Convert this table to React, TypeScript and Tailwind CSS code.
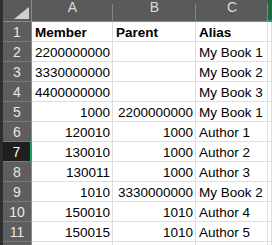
const rows: [string, string, string, string][] = [
  ["2", "2200000000", "", "My Book 1"],
  ["3", "3330000000", "", "My Book 2"],
  ["4", "4400000000", "", "My Book 3"],
  ["5", "1000", "2200000000", "My Book 1"],
  ["6", "120010", "1000", "Author 1"],
  ["7", "130010", "1000", "Author 2"],
  ["8", "130011", "1000", "Author 3"],
  ["9", "1010", "3330000000", "My Book 2"],
  ["10", "150010", "1010", "Author 4"],
  ["11", "150015", "1010", "Author 5"],
  ["12", "", "", ""],
];

const font = { fontFamily: '"Liberation Sans", Arial, sans-serif' };

const RowHeader = ({ n }: { n: string }) => {
  const selected = n === "7";
  return (
    <div
      className={`h-5 flex items-center justify-center pt-[2px] text-[14px] border-b border-[#7a7a7a] ${
        selected
          ? "bg-[#1f1f1f] text-white border-r-2 border-r-[#21a366]"
          : "bg-[#5e5e5e] text-[#e8e8e8] border-r border-r-[#8a8a8a]"
      }`}
    >
      {n === "12" ? "" : n}
    </div>
  );
};

const Cell = ({ text, bold, left }: { text: string; bold?: boolean; left?: boolean }) => (
  <div
    className={`h-5 bg-white border-r border-b border-[#dedede] pt-[1px] text-[13.5px] leading-[20px] text-black whitespace-nowrap ${
      bold ? "font-bold" : ""
    } ${left ? "pl-[3px] text-left" : "pr-[2px] text-right"}`}
  >
    {text}
  </div>
);

export default function App() {
  return (
    <div className="w-[272px] h-[245px] overflow-hidden bg-white" style={font}>
      <div className="grid grid-cols-[3px_29px_81px_83px_72px_1fr]">
        {/* column header row */}
        <div className="h-[22px] bg-[#2e2e2e]" />
        <div className="h-[22px] bg-[#5a5a5a] border-r border-b border-[#8a8a8a] relative">
          <div className="absolute right-[2px] bottom-[2px] w-0 h-0 border-l-[15px] border-l-transparent border-b-[12px] border-b-[#d0d0d0]" />
        </div>
        {["A", "B", "C"].map((c) => (
          <div
            key={c}
            className="h-[22px] bg-[#5a5a5a] border-b border-[#8a8a8a] flex items-end justify-center pb-[3px] text-[14px] text-[#dcdcdc] relative"
          >
            {c}
            <div className="absolute right-0 top-[4px] bottom-0 w-px bg-[#858585]" />
          </div>
        ))}
        <div className="h-[22px] bg-[#1e6b41] border-b-2 border-[#21a366]" />

        {/* row 1 */}
        <div className="h-5 bg-[#2e2e2e]" />
        <RowHeader n="1" />
        <Cell text="Member" bold left />
        <Cell text="Parent" bold left />
        <Cell text="Alias" bold left />
        <Cell text="" />

        {rows.map(([n, a, b, c]) => (
          <div key={n} className="contents">
            <div className="h-5 bg-[#2e2e2e]" />
            <RowHeader n={n} />
            <Cell text={a} />
            <Cell text={b} />
            <Cell text={c} left />
            <Cell text="" />
          </div>
        ))}
      </div>
    </div>
  );
}
